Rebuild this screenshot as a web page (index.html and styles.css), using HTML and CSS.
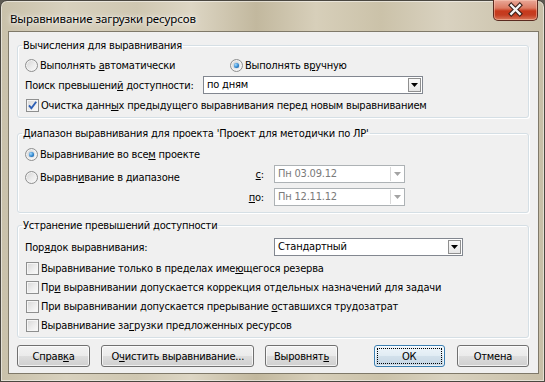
FILE: index.html
```html
<!DOCTYPE html>
<html lang="ru">
<head>
    <meta charset="UTF-8">
    <title>Выравнивание загрузки ресурсов</title>
    <link rel="stylesheet" href="styles.css">
</head>
<body>
    <div class="window">
        <div class="titlebar">
            <span class="title">Выравнивание загрузки ресурсов</span>
            <div class="close">
                <svg width="45" height="20" viewBox="0 0 45 20">
                    <path d="M18 5 L27 14 M27 5 L18 14" stroke="#3b1f18" stroke-width="4.6" stroke-linecap="square"/>
                    <path d="M18 5 L27 14 M27 5 L18 14" stroke="#f4f4f4" stroke-width="2.4" stroke-linecap="square"/>
                </svg>
            </div>
        </div>

        <div class="client">
            <fieldset class="group">
                <legend>Вычисления для выравнивания</legend>
                <div class="group-body calc">
                    <div class="row">
                        <label class="opt first"><span class="radio"></span><span>Выполнять <u>а</u>втоматически</span></label>
                        <label class="opt"><span class="radio on"></span><span>Выполнять в<u>р</u>учную</span></label>
                    </div>
                    <div class="row combo-row">
                        <span class="lbl search-lbl">Поиск превышени<u>й</u> доступности:</span>
                        <div class="combo search-combo">
                            <span class="value">по дням</span>
                            <span class="drop">
                                <svg width="7" height="4" viewBox="0 0 7 4"><path d="M0 0 H7 L3.5 4 Z" fill="#000"/></svg>
                            </span>
                        </div>
                    </div>
                    <div class="row">
                        <label class="opt"><span class="check on">
                            <svg width="11" height="11" viewBox="0 0 11 11"><path d="M2 5.3 L4.4 8.3 L9.2 1.8" stroke="#2d5fb5" stroke-width="1.9" fill="none"/></svg>
                        </span><span>Очистка данн<u>ы</u>х предыдущего выравнивания перед новым выравниванием</span></label>
                    </div>
                </div>
            </fieldset>

            <fieldset class="group range">
                <legend>Диапазон выравнивания для проекта 'Проект для методички по ЛР'</legend>
                <div class="group-body range-body">
                    <div class="row">
                        <label class="opt"><span class="radio on"></span><span>Выравнивание во все<u>м</u> проекте</span></label>
                    </div>
                    <div class="range-row">
                        <label class="opt range-opt"><span class="radio"></span><span>Выравн<u>и</u>вание в диапазоне</span></label>
                        <div class="dates">
                            <div class="date-row">
                                <span class="date-lbl"><u>с</u>:</span>
                                <div class="combo disabled date-combo">
                                    <span class="value">Пн 03.09.12</span>
                                    <span class="drop">
                                        <svg width="7" height="4" viewBox="0 0 7 4"><path d="M0 0 H7 L3.5 4 Z" fill="#a3a3a3"/></svg>
                                    </span>
                                </div>
                            </div>
                            <div class="date-row">
                                <span class="date-lbl"><u>п</u>о:</span>
                                <div class="combo disabled date-combo">
                                    <span class="value">Пн 12.11.12</span>
                                    <span class="drop">
                                        <svg width="7" height="4" viewBox="0 0 7 4"><path d="M0 0 H7 L3.5 4 Z" fill="#a3a3a3"/></svg>
                                    </span>
                                </div>
                            </div>
                        </div>
                    </div>
                </div>
            </fieldset>

            <fieldset class="group resolve">
                <legend>Устранение превышений доступности</legend>
                <div class="group-body resolve-body">
                    <div class="row combo-row">
                        <span class="lbl order-lbl">Пор<u>я</u>док выравнивания:</span>
                        <div class="combo order-combo">
                            <span class="value">Стандартный</span>
                            <span class="drop">
                                <svg width="7" height="4" viewBox="0 0 7 4"><path d="M0 0 H7 L3.5 4 Z" fill="#000"/></svg>
                            </span>
                        </div>
                    </div>
                    <div class="row check-row">
                        <label class="opt"><span class="check"></span><span>Выравнивание только в пределах име<u>ю</u>щегося резерва</span></label>
                    </div>
                    <div class="row check-row">
                        <label class="opt"><span class="check"></span><span>Пр<u>и</u> выравнивании допускается коррекция отдельных назначений для задачи</span></label>
                    </div>
                    <div class="row check-row">
                        <label class="opt"><span class="check"></span><span>При выравнивании допускается прерывание <u>о</u>ставшихся трудозатрат</span></label>
                    </div>
                    <div class="row check-row">
                        <label class="opt"><span class="check"></span><span>Выравнивание за<u>г</u>рузки предложенных ресурсов</span></label>
                    </div>
                </div>
            </fieldset>

            <div class="buttons">
                <button class="btn btn-help">Справ<u>к</u>а</button>
                <button class="btn btn-clear">О<u>ч</u>истить выравнивание...</button>
                <button class="btn btn-level">Выровнят<u>ь</u></button>
                <button class="btn btn-ok default">ОК</button>
                <button class="btn btn-cancel">Отмена</button>
            </div>
        </div>
    </div>
</body>
</html>
```

FILE: styles.css
```css
* {
    margin: 0;
    padding: 0;
    box-sizing: border-box;
}

body {
    width: 545px;
    height: 382px;
    overflow: hidden;
    background: #5d5a52;
    font-family: "DejaVu Sans Condensed", "DejaVu Sans", sans-serif;
    font-stretch: condensed;
    font-size: 11px;
    letter-spacing: -0.2px;
    color: #000;
}

u {
    text-decoration-thickness: 1px;
    text-underline-offset: 1px;
}

/* window frame */
.window {
    width: 545px;
    height: 382px;
    display: flex;
    flex-direction: column;
    padding: 0 5px 7px 7px;
    border: 1px solid #4a4740;
    border-radius: 7px 7px 0 0;
    background: linear-gradient(90deg, #c9c1aa 0%, #d8d1be 12%, #cfc7b1 25%, #ddd6c4 35%, #c2b89e 47%, #d7cfba 58%, #cbc2a9 70%, #d9d2c0 82%, #c8bfa7 100%);
    box-shadow: inset 0 0 0 1px rgba(255, 255, 255, 0.5);
}

.titlebar {
    height: 30px;
    display: flex;
    justify-content: space-between;
    align-items: flex-start;
    padding-left: 2px;
}

.title {
    font-family: "Noto Sans", "Open Sans", sans-serif;
    font-size: 11.5px;
    letter-spacing: -0.1px;
    line-height: 15px;
    padding-top: 10px;
    color: #000;
    text-shadow: 0 0 6px rgba(255, 255, 255, 0.9), 0 0 3px rgba(255, 255, 255, 0.9);
}

.close {
    width: 45px;
    height: 21px;
    margin-top: -1px;
    margin-right: 1px;
    border: 1px solid #5a2a20;
    border-top: none;
    border-radius: 0 0 5px 5px;
    background: linear-gradient(#e9a898 0%, #dc7b63 40%, #c7391c 55%, #c43d21 75%, #d9785b 100%);
    box-shadow: inset 0 0 0 1px rgba(255, 210, 190, 0.45);
    display: flex;
    align-items: center;
    justify-content: center;
}

.close svg {
    display: block;
}

/* client area */
.client {
    flex: 1;
    border: 1px solid #7f7969;
    background: #f0f0f0;
    padding: 7px 9px 0 8px;
}

.group {
    border: 1px solid #d5dfe5;
    border-radius: 3px;
    box-shadow: inset 1px 1px 0 #fff, 1px 1px 0 #fff;
    min-width: 0;
}

.group legend {
    line-height: 13px;
    margin-left: 4px;
    padding: 0 1px;
}

.group-body {
    padding-left: 7px;
}

.row {
    display: flex;
    align-items: center;
    height: 16px;
}

.opt {
    display: flex;
    align-items: center;
    white-space: nowrap;
}

.lbl {
    white-space: nowrap;
}

/* calculations */
.calc {
    padding-bottom: 4px;
}

.calc .row:first-child {
    margin-top: 5px;
}

.calc .combo-row {
    height: 18px;
    margin: 3px 0;
}

.opt.first {
    width: 205px;
}

.search-lbl {
    width: 178px;
}

.search-combo {
    width: 220px;
}

/* range */
.range {
    margin-top: 9px;
}

.range-body {
    padding-bottom: 6px;
}

.range-body .row {
    margin-top: 6px;
}

.range-row {
    display: flex;
    align-items: flex-start;
    margin-top: 3px;
}

.range-opt {
    width: 215px;
    height: 18px;
    margin-top: 3px;
}

.dates {
    display: flex;
    flex-direction: column;
    gap: 5px;
}

.date-row {
    display: flex;
    align-items: center;
}

.date-lbl {
    width: 24px;
    text-align: right;
    margin-right: 10px;
}

.date-combo {
    width: 131px;
}

/* resolve */
.resolve {
    margin-top: 6px;
}

.resolve-body {
    padding-bottom: 2px;
}

.resolve .combo-row {
    height: 18px;
    margin: 6px 0 3px;
}

.order-lbl {
    width: 249px;
}

.order-combo {
    width: 189px;
}

.resolve .check-row {
    height: 19px;
}

/* radios and checkboxes */
.radio {
    width: 13px;
    height: 13px;
    flex: none;
    margin-right: 2px;
    border-radius: 50%;
    border: 1px solid #8e8f8f;
    background: linear-gradient(135deg, #d3d3d3 0%, #ececec 55%, #fbfbfb 100%);
    box-shadow: inset 0 0 0 1px #f3f3f3;
    display: flex;
    align-items: center;
    justify-content: center;
}

.radio.on::after {
    content: "";
    width: 5px;
    height: 5px;
    border-radius: 50%;
    background: radial-gradient(circle at 35% 35%, #a6ddff 0%, #2f86d0 55%, #174f86 100%);
    box-shadow: 0 0 1px #2b6aa8;
}

.check {
    width: 13px;
    height: 13px;
    flex: none;
    margin: 0 2px 0 1px;
    border: 1px solid #8e8f8f;
    background: linear-gradient(135deg, #d6d6d6 0%, #ededed 55%, #fbfbfb 100%);
    box-shadow: inset 0 0 0 1px #f5f5f5;
    display: flex;
    align-items: center;
    justify-content: center;
}

.check svg {
    display: block;
}

/* combo boxes */
.combo {
    height: 18px;
    display: flex;
    align-items: stretch;
    border: 1px solid #828790;
    background: #fff;
    padding: 1px;
}

.combo .value {
    flex: 1;
    padding-left: 2px;
    line-height: 14px;
    white-space: nowrap;
}

.combo .drop {
    width: 13px;
    border: 1px solid #8f8f8f;
    background: linear-gradient(#fafafa, #e6e6e6);
    display: flex;
    align-items: center;
    justify-content: center;
}

.combo.disabled {
    border-color: #adb2b5;
}

.combo.disabled .value {
    color: #7a7a7a;
}

.combo.disabled .drop {
    border: none;
    border-left: 1px solid #d9d9d9;
    background: #fff;
}

/* buttons */
.buttons {
    display: flex;
    gap: 11px;
    margin-top: 7px;
}

.btn {
    height: 22px;
    font-family: inherit;
    font-stretch: condensed;
    font-size: 11px;
    letter-spacing: -0.2px;
    color: #000;
    border: 1px solid #707070;
    border-radius: 3px;
    background: linear-gradient(#f2f2f2 0%, #ebebeb 48%, #dddddd 52%, #cfcfcf 100%);
    box-shadow: inset 0 0 0 1px rgba(255, 255, 255, 0.7);
}

.btn-help {
    width: 74px;
}

.btn-clear {
    width: 155px;
}

.btn-level {
    width: 73px;
}

.btn-ok {
    width: 72px;
    margin-left: 25px;
}

.btn-cancel {
    width: 73px;
    margin-left: 1px;
}

.btn.default {
    border-color: #3c7fb1;
    background: linear-gradient(#eef5fa 0%, #e1ecf4 48%, #d2e0eb 52%, #c5d6e4 100%);
    box-shadow: inset 0 0 0 1px rgba(255, 255, 255, 0.6);
    outline: 1px dotted #000;
    outline-offset: -4px;
}
```
